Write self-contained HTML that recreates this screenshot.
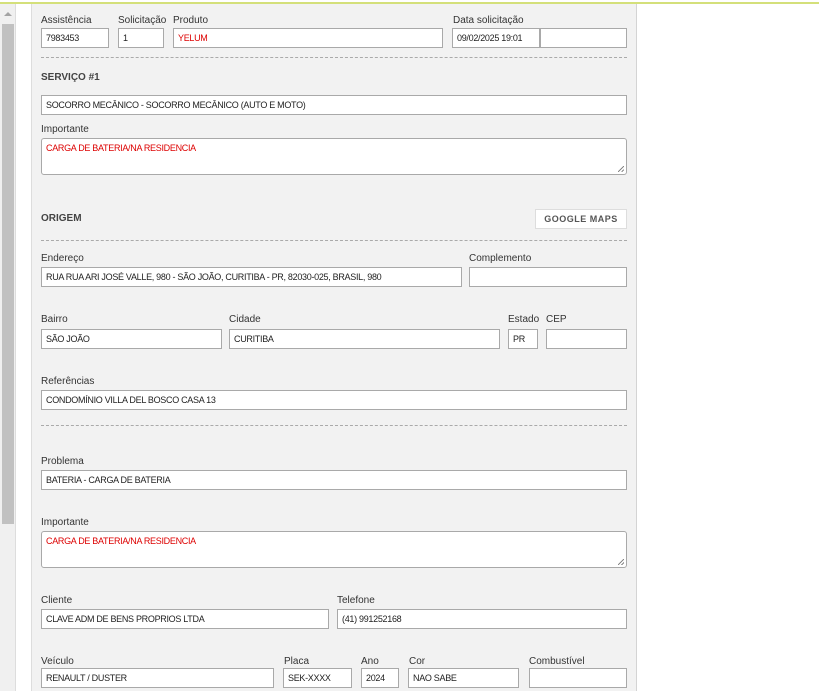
<!DOCTYPE html>
<html><head><meta charset="utf-8"><style>
*{margin:0;padding:0;box-sizing:border-box}
body{width:819px;height:691px;overflow:hidden;background:#fff;position:relative;font-family:"Liberation Sans",Tahoma,sans-serif;font-size:11px;color:#333}
#top{position:absolute;left:0;top:2px;width:819px;height:2px;background:#d4e07a}
#track{position:absolute;left:0;top:4px;width:16px;height:687px;background:#f0f0f0;border-right:1px solid #ddd}
#thumb{position:absolute;left:2px;top:20px;width:12px;height:500px;background:#c1c1c1}
#arrow{position:absolute;left:4px;top:8px;width:0;height:0;border-left:4px solid transparent;border-right:4px solid transparent;border-bottom:4px solid #a3a3a3}
#panel{position:absolute;left:31px;top:4px;width:606px;height:687px;background:#f2f2f2;border-left:1px solid #ddd;border-right:1px solid #d4d4d4}
.l{position:absolute;font-size:10px;color:#333;white-space:nowrap;margin-top:1px}
.i{position:absolute;height:20px;background:#fff;border:1px solid #a9a9a9;font-size:9px;letter-spacing:-0.3px;line-height:19px;padding-left:4px;white-space:nowrap;overflow:hidden;color:#222}
.t{position:absolute;background:#fff;border:1px solid #a9a9a9;border-radius:3px;font-size:9px;letter-spacing:-0.3px;padding:4px 4px;color:#d00}
.t:after{content:"";position:absolute;right:2px;bottom:2px;width:6px;height:6px;background:linear-gradient(135deg,transparent 45%,#888 45%,#888 55%,transparent 55%,transparent 75%,#888 75%,#888 85%,transparent 85%)}
.d{position:absolute;left:41px;width:586px;border-top:1px dashed #aaa}
.h{position:absolute;font-weight:bold;font-size:10px;color:#444;margin-top:1px}
.red{color:#d00}
</style></head><body>
<div id="top"></div>
<div id="track"><div id="arrow"></div><div id="thumb"></div></div>
<div id="panel"></div>

<div class="l" style="left:41px;top:14px">Assistência</div>
<div class="l" style="left:118px;top:14px">Solicitação</div>
<div class="l" style="left:173px;top:14px">Produto</div>
<div class="l" style="left:453px;top:14px">Data solicitação</div>
<div class="i" style="left:41px;top:28px;width:68px">7983453</div>
<div class="i" style="left:118px;top:28px;width:46px">1</div>
<div class="i red" style="left:173px;top:28px;width:270px">YELUM</div>
<div class="i" style="left:452px;top:28px;width:88px">09/02/2025 19:01</div>
<div class="i" style="left:540px;top:28px;width:87px"></div>
<div class="d" style="top:57px"></div>

<div class="h" style="left:41px;top:71px">SERVIÇO #1</div>
<div class="i" style="left:41px;top:95px;width:586px">SOCORRO MECÂNICO - SOCORRO MECÂNICO (AUTO E MOTO)</div>
<div class="l" style="left:41px;top:123px">Importante</div>
<div class="t" style="left:41px;top:138px;width:586px;height:37px">CARGA DE BATERIA/NA RESIDENCIA</div>

<div class="h" style="left:41px;top:212px">ORIGEM</div>
<div style="position:absolute;left:535px;top:209px;width:92px;height:20px;background:#fff;border:1px solid #ddd;font-size:9px;font-weight:bold;color:#555;text-align:center;line-height:18px;letter-spacing:0.5px">GOOGLE MAPS</div>
<div class="d" style="top:240px"></div>

<div class="l" style="left:41px;top:252px">Endereço</div>
<div class="l" style="left:469px;top:252px">Complemento</div>
<div class="i" style="left:41px;top:267px;width:421px">RUA RUA ARI JOSÉ VALLE, 980 - SÃO JOÃO, CURITIBA - PR, 82030-025, BRASIL, 980</div>
<div class="i" style="left:469px;top:267px;width:158px"></div>

<div class="l" style="left:41px;top:313px">Bairro</div>
<div class="l" style="left:229px;top:313px">Cidade</div>
<div class="l" style="left:508px;top:313px">Estado</div>
<div class="l" style="left:546px;top:313px">CEP</div>
<div class="i" style="left:41px;top:329px;width:181px">SÃO JOÃO</div>
<div class="i" style="left:229px;top:329px;width:271px">CURITIBA</div>
<div class="i" style="left:508px;top:329px;width:30px">PR</div>
<div class="i" style="left:546px;top:329px;width:81px"></div>

<div class="l" style="left:41px;top:375px">Referências</div>
<div class="i" style="left:41px;top:390px;width:586px">CONDOMÍNIO VILLA DEL BOSCO CASA 13</div>
<div class="d" style="top:425px"></div>

<div class="l" style="left:41px;top:455px">Problema</div>
<div class="i" style="left:41px;top:470px;width:586px">BATERIA - CARGA DE BATERIA</div>
<div class="l" style="left:41px;top:516px">Importante</div>
<div class="t" style="left:41px;top:531px;width:586px;height:37px">CARGA DE BATERIA/NA RESIDENCIA</div>

<div class="l" style="left:41px;top:594px">Cliente</div>
<div class="l" style="left:337px;top:594px">Telefone</div>
<div class="i" style="left:41px;top:609px;width:288px">CLAVE ADM DE BENS PROPRIOS LTDA</div>
<div class="i" style="left:337px;top:609px;width:290px">(41) 991252168</div>

<div class="l" style="left:41px;top:655px">Veículo</div>
<div class="l" style="left:284px;top:655px">Placa</div>
<div class="l" style="left:361px;top:655px">Ano</div>
<div class="l" style="left:409px;top:655px">Cor</div>
<div class="l" style="left:529px;top:655px">Combustível</div>
<div class="i" style="left:41px;top:668px;width:233px">RENAULT / DUSTER</div>
<div class="i" style="left:283px;top:668px;width:69px">SEK-XXXX</div>
<div class="i" style="left:361px;top:668px;width:38px">2024</div>
<div class="i" style="left:408px;top:668px;width:111px">NAO SABE</div>
<div class="i" style="left:529px;top:668px;width:98px"></div>
</body></html>
